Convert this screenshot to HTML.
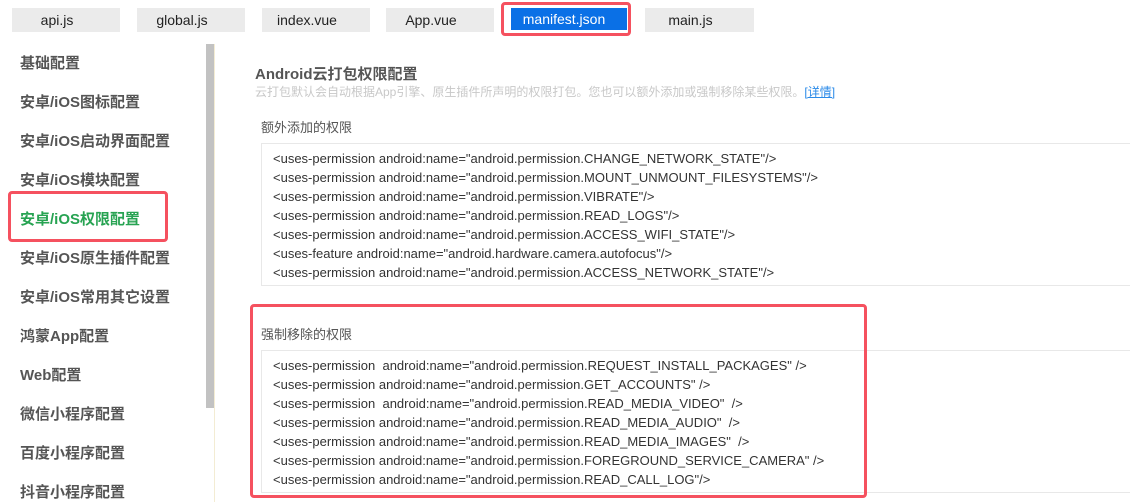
<!DOCTYPE html>
<html><head><meta charset="utf-8"><style>
*{margin:0;padding:0;box-sizing:border-box}
body{width:1130px;height:502px;background:#fff;position:relative;overflow:hidden;font-family:"Liberation Sans","Noto Sans CJK SC",sans-serif;color:#333}
.tab{position:absolute;top:8px;height:24px;background:#ebebeb;font-size:14px;line-height:24px;text-align:center;color:#222;padding-right:18px}
.side{position:absolute;left:20px;font-size:15px;font-weight:bold;color:#555}
.code{position:absolute;left:261px;right:0;border:1px solid #e8e8e8;border-right:none;padding:5px 0 0 11px;font-size:13px;line-height:19px;color:#333;white-space:pre}
.red{position:absolute;border:3px solid #f5515f;border-radius:4px}
</style></head><body>
<div class="tab" style="left:12px;width:108px">api.js</div>
<div class="tab" style="left:137px;width:108px">global.js</div>
<div class="tab" style="left:262px;width:108px">index.vue</div>
<div class="tab" style="left:386px;width:108px">App.vue</div>
<div class="tab" style="left:511px;width:116px;background:#0a70e6;color:#fff;height:22px;line-height:23px;padding-right:10px">manifest.json</div>
<div class="red" style="left:501px;top:2px;width:130px;height:34px"></div>
<div class="tab" style="left:645px;width:109px">main.js</div>

<div style="position:absolute;left:206px;top:44px;width:8px;height:364px;background:#c2c2c2"></div>
<div style="position:absolute;left:214px;top:44px;width:1px;height:458px;background:#f3ecd3"></div>

<div class="side" style="top:52px">基础配置</div>
<div class="side" style="top:91px">安卓/iOS图标配置</div>
<div class="side" style="top:130px">安卓/iOS启动界面配置</div>
<div class="side" style="top:169px">安卓/iOS模块配置</div>
<div class="side" style="top:208px;color:#27a352">安卓/iOS权限配置</div>
<div class="red" style="left:8px;top:191px;width:160px;height:51px"></div>
<div class="side" style="top:247px">安卓/iOS原生插件配置</div>
<div class="side" style="top:286px">安卓/iOS常用其它设置</div>
<div class="side" style="top:325px">鸿蒙App配置</div>
<div class="side" style="top:364px">Web配置</div>
<div class="side" style="top:403px">微信小程序配置</div>
<div class="side" style="top:442px">百度小程序配置</div>
<div class="side" style="top:481px">抖音小程序配置</div>

<div style="position:absolute;left:255px;top:63px;font-size:15px;font-weight:bold;color:#555">Android云打包权限配置</div>
<div style="position:absolute;left:255px;top:83px;font-size:12px;color:#c8c8c8">云打包默认会自动根据App引擎、原生插件所声明的权限打包。您也可以额外添加或强制移除某些权限。<span style="color:#2a8ae8;text-decoration:underline">[详情]</span></div>
<div style="position:absolute;left:261px;top:117px;font-size:13px;color:#555">额外添加的权限</div>
<div class="code" style="top:143px;height:143px">&lt;uses-permission android:name="android.permission.CHANGE_NETWORK_STATE"/&gt;
&lt;uses-permission android:name="android.permission.MOUNT_UNMOUNT_FILESYSTEMS"/&gt;
&lt;uses-permission android:name="android.permission.VIBRATE"/&gt;
&lt;uses-permission android:name="android.permission.READ_LOGS"/&gt;
&lt;uses-permission android:name="android.permission.ACCESS_WIFI_STATE"/&gt;
&lt;uses-feature android:name="android.hardware.camera.autofocus"/&gt;
&lt;uses-permission android:name="android.permission.ACCESS_NETWORK_STATE"/&gt;</div>

<div style="position:absolute;left:261px;top:324px;font-size:13px;color:#555">强制移除的权限</div>
<div class="code" style="top:350px;height:143px">&lt;uses-permission  android:name="android.permission.REQUEST_INSTALL_PACKAGES" /&gt;
&lt;uses-permission android:name="android.permission.GET_ACCOUNTS" /&gt;
&lt;uses-permission  android:name="android.permission.READ_MEDIA_VIDEO"  /&gt;
&lt;uses-permission android:name="android.permission.READ_MEDIA_AUDIO"  /&gt;
&lt;uses-permission android:name="android.permission.READ_MEDIA_IMAGES"  /&gt;
&lt;uses-permission android:name="android.permission.FOREGROUND_SERVICE_CAMERA" /&gt;
&lt;uses-permission android:name="android.permission.READ_CALL_LOG"/&gt;</div>
<div class="red" style="left:250px;top:304px;width:617px;height:194px"></div>
</body></html>
